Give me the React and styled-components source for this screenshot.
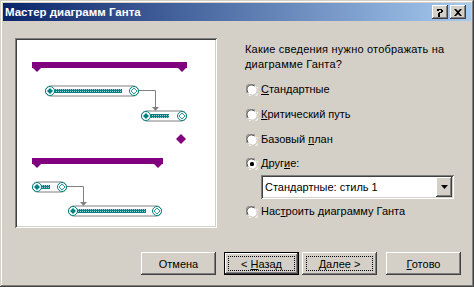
import React from "react";
import styled, { createGlobalStyle, css } from "styled-components";

const Global = createGlobalStyle`
  html, body { margin: 0; padding: 0; background: #d4d0c8; }
  body { font-family: "Liberation Sans", Arial, sans-serif; font-size: 11px; color: #000; }
`;

const raised = css`
  box-shadow: inset -1px -1px #404040, inset 1px 1px #ffffff,
    inset -2px -2px #808080, inset 2px 2px #d4d0c8;
`;
const sunken = css`
  box-shadow: inset 1px 1px #808080, inset -1px -1px #ffffff,
    inset 2px 2px #404040, inset -2px -2px #d4d0c8;
`;

const Window = styled.div`
  width: 474px;
  height: 287px;
  box-sizing: border-box;
  background: #d4d0c8;
  padding: 3px;
  display: flex;
  flex-direction: column;
  box-shadow: inset -1px -1px #404040, inset 1px 1px #d4d0c8,
    inset -2px -2px #808080, inset 2px 2px #ffffff;
`;

const TitleBar = styled.div`
  height: 18px;
  flex: none;
  display: flex;
  align-items: center;
  padding: 0 5px 0 2px;
  background: linear-gradient(to right, #0a246a, #a6caf0);
  color: #fff;
  font-weight: bold;
  font-size: 11.5px;
`;

const Title = styled.div`
  flex: 1;
`;

const CaptionButton = styled.div`
  width: 16px;
  height: 14px;
  box-sizing: border-box;
  background: #d4d0c8;
  ${raised};
  color: #000;
  display: flex;
  align-items: center;
  justify-content: center;
  margin-left: ${(p) => (p.$gap ? "2px" : "0")};
`;

const Body = styled.div`
  flex: 1;
  display: flex;
  flex-direction: column;
  padding: 17px 10px 9px 12px;
`;

const Main = styled.div`
  display: flex;
  flex: 1;
`;

const Preview = styled.div`
  width: 202px;
  height: 190px;
  box-sizing: border-box;
  padding: 2px;
  background: #fff;
  ${sunken};
  flex: none;
`;

const Options = styled.div`
  margin-left: 28px;
  display: flex;
  flex-direction: column;
`;

const Question = styled.div`
  margin-top: 4px;
  line-height: 15px;
  width: 215px;
  letter-spacing: 0.2px;
`;

const RadioRow = styled.div`
  display: flex;
  align-items: center;
  height: 13px;
  margin-top: ${(p) => p.$mt}px;
  margin-left: 1px;
`;

const RadioLabel = styled.span`
  margin-left: 3px;
  line-height: 13px;
`;

const Key = styled.span`
  text-decoration: underline;
  text-underline-offset: 1px;
`;

const Combo = styled.div`
  margin-top: 5px;
  margin-left: 16px;
  width: 193px;
  height: 24px;
  box-sizing: border-box;
  padding: 2px;
  background: #fff;
  ${sunken};
  display: flex;
  align-items: stretch;
`;

const ComboText = styled.div`
  flex: 1;
  display: flex;
  align-items: center;
  padding-left: 2px;
`;

const ComboButton = styled.div`
  width: 16px;
  background: #d4d0c8;
  ${raised};
  display: flex;
  align-items: center;
  justify-content: center;
`;

const ButtonRow = styled.div`
  display: flex;
  justify-content: flex-end;
  height: 23px;
`;

const Button = styled.div`
  width: 75px;
  height: 23px;
  box-sizing: border-box;
  background: #d4d0c8;
  display: flex;
  align-items: center;
  justify-content: center;
  position: relative;
  margin-left: ${(p) => p.$ml || 0}px;
  ${(p) =>
    p.$default
      ? css`
          box-shadow: inset 0 0 0 1px #000, inset -2px -2px #404040,
            inset 2px 2px #ffffff, inset -3px -3px #808080;
        `
      : raised};
  ${(p) =>
    p.$focus &&
    css`
      &::after {
        content: "";
        position: absolute;
        inset: 4px;
        border: 1px dotted #000;
      }
    `}
`;

const ButtonLabel = styled.span`
  white-space: pre;
`;

function Radio({ checked }) {
  return (
    <svg width="12" height="12" viewBox="0 0 12 12">
      <circle cx="6" cy="6" r="5" fill="#fff" />
      <path d="M1.2 9 A5.2 5.2 0 0 1 9 1.2" stroke="#808080" fill="none" />
      <path d="M2.2 8.5 A4.2 4.2 0 0 1 8.5 2.2" stroke="#404040" fill="none" />
      <path d="M3 11 A5.5 5.5 0 0 0 11 3" stroke="#fff" fill="none" />
      <path d="M3.5 9.8 A4.3 4.3 0 0 0 9.8 3.5" stroke="#d4d0c8" fill="none" />
      {checked && <rect x="4" y="4" width="4" height="4" rx="1.5" fill="#000" />}
    </svg>
  );
}

const TEAL = "#008080";
const PURPLE = "#800080";
const GRAY = "#808080";

function Summary({ x1, x2, y }) {
  return (
    <g fill={PURPLE}>
      <rect x={x1} y={y} width={x2 - x1} height={6} />
      <polygon points={`${x1},${y + 5} ${x1 + 10},${y + 5} ${x1 + 5},${y + 10}`} />
      <polygon points={`${x2 - 10},${y + 5} ${x2},${y + 5} ${x2 - 5},${y + 10}`} />
    </g>
  );
}

function Task({ x1, x2, cy, p2 }) {
  const lx = x1 + 5;
  const rx = x2 - 5;
  return (
    <g>
      <rect x={x1 + 0.5} y={cy - 5} width={x2 - x1 - 1} height={10} rx={5} fill="#fff" stroke={GRAY} />
      <rect x={lx + 4} y={cy - 2} width={p2 - lx - 4} height={4} fill="url(#hatch)" />
      <circle cx={lx} cy={cy} r={4.5} fill="#fff" stroke={TEAL} />
      <polygon points={`${lx},${cy - 3} ${lx + 3},${cy} ${lx},${cy + 3} ${lx - 3},${cy}`} fill={TEAL} />
      <circle cx={rx} cy={cy} r={4.5} fill="#fff" stroke={TEAL} />
      <polygon
        points={`${rx},${cy - 3} ${rx + 3},${cy} ${rx},${cy + 3} ${rx - 3},${cy}`}
        fill="#fff"
        stroke={TEAL}
        strokeWidth="0.8"
      />
    </g>
  );
}

function Link({ x1, y1, x2, y2 }) {
  return (
    <g>
      <polyline points={`${x1},${y1 + 0.5} ${x2 + 0.5},${y1 + 0.5} ${x2 + 0.5},${y2 - 3}`} fill="none" stroke={GRAY} />
      <polygon points={`${x2 - 3},${y2 - 4} ${x2 + 4},${y2 - 4} ${x2 + 0.5},${y2}`} fill={GRAY} />
    </g>
  );
}

function Chart() {
  return (
    <svg width="198" height="186" viewBox="17 40 198 186">
      <defs>
        <pattern id="hatch" width="2" height="2" patternUnits="userSpaceOnUse">
          <rect width="2" height="2" fill={TEAL} />
          <rect x="0" y="1" width="1" height="1" fill="#9fd0d0" />
        </pattern>
      </defs>
      <Summary x1={32} x2={187} y={62} />
      <Task x1={45} x2={139} cy={91} p2={122} />
      <Link x1={139} y1={90} x2={155} y2={111} />
      <Task x1={141} x2={187} cy={116} p2={169} />
      <polygon points="181,134 186,139 181,144 176,139" fill={PURPLE} />
      <Summary x1={32} x2={163} y={158} />
      <Task x1={32} x2={67} cy={187} p2={50} />
      <Link x1={67} y1={186} x2={83} y2={206} />
      <Task x1={68} x2={162} cy={211} p2={146} />
    </svg>
  );
}

export default function App() {
  return (
    <>
      <Global />
      <Window>
        <TitleBar>
          <Title>Мастер диаграмм Ганта</Title>
          <CaptionButton>
            <svg width="8" height="9" viewBox="0 0 8 9">
              <path d="M1 1h5v1h1v2h-1v1h-2v2h-2v-2h1v-1h2v-2h-2v1h-2z" fill="#000" />
              <rect x="2" y="7" width="2" height="2" fill="#000" />
            </svg>
          </CaptionButton>
          <CaptionButton $gap>
            <svg width="8" height="7" viewBox="0 0 8 7">
              <path d="M0 0h2l2 2 2-2h2l-3 3.5 3 3.5h-2l-2-2-2 2h-2l3-3.5z" fill="#000" />
            </svg>
          </CaptionButton>
        </TitleBar>
        <Body>
          <Main>
            <Preview>
              <Chart />
            </Preview>
            <Options>
              <Question>
                Какие сведения нужно отображать на
                <br />
                диаграмме Ганта?
              </Question>
              <RadioRow $mt={11}>
                <Radio />
                <RadioLabel>
                  <Key>С</Key>тандартные
                </RadioLabel>
              </RadioRow>
              <RadioRow $mt={12}>
                <Radio />
                <RadioLabel>
                  <Key>К</Key>ритический путь
                </RadioLabel>
              </RadioRow>
              <RadioRow $mt={12}>
                <Radio />
                <RadioLabel>
                  Базовый <Key>п</Key>лан
                </RadioLabel>
              </RadioRow>
              <RadioRow $mt={11}>
                <Radio checked />
                <RadioLabel>
                  Друг<Key>и</Key>е:
                </RadioLabel>
              </RadioRow>
              <Combo>
                <ComboText>Стандартные: стиль 1</ComboText>
                <ComboButton>
                  <svg width="7" height="4" viewBox="0 0 7 4">
                    <polygon points="0,0 7,0 3.5,4" fill="#000" />
                  </svg>
                </ComboButton>
              </Combo>
              <RadioRow $mt={6}>
                <Radio />
                <RadioLabel>
                  Нас<Key>т</Key>роить диаграмму Ганта
                </RadioLabel>
              </RadioRow>
            </Options>
          </Main>
          <ButtonRow>
            <Button>
              <ButtonLabel>Отмена</ButtonLabel>
            </Button>
            <Button $ml={8} $default $focus>
              <ButtonLabel>
                {"< "}
                <Key>Н</Key>азад
              </ButtonLabel>
            </Button>
            <Button $ml={3} $focus>
              <ButtonLabel>
                <Key>Д</Key>
                {"алее >"}
              </ButtonLabel>
            </Button>
            <Button $ml={9}>
              <ButtonLabel>
                <Key>Г</Key>отово
              </ButtonLabel>
            </Button>
          </ButtonRow>
        </Body>
      </Window>
    </>
  );
}
